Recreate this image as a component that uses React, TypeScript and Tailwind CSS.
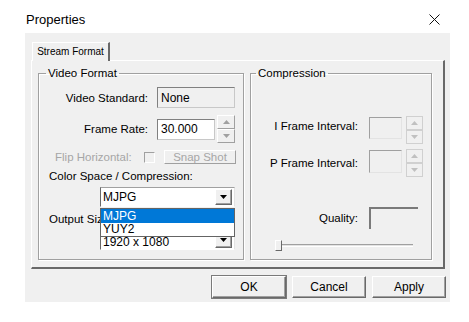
import React from "react";

const Up = ({ c = "#8a8a8a" }: { c?: string }) => (
  <svg width="7" height="4" viewBox="0 0 7 4"><path d="M0 4 L3.5 0 L7 4 Z" fill={c} /></svg>
);
const Down = ({ c = "#8a8a8a" }: { c?: string }) => (
  <svg width="7" height="4" viewBox="0 0 7 4"><path d="M0 0 L3.5 4 L7 0 Z" fill={c} /></svg>
);

function Spinner({ w, h, c, light }: { w: string; h: string; c?: string; light?: boolean }) {
  const b = light
    ? "border border-[#d0d0d0]"
    : "border border-t-white border-l-white border-b-[#a0a0a0] border-r-[#a0a0a0]";
  return (
    <div className={`flex flex-col ${w} ${h}`}>
      <div className={`flex-1 flex items-center justify-center bg-[#f0f0f0] ${b}`}>
        <Up c={c} />
      </div>
      <div className={`flex-1 flex items-center justify-center bg-[#f0f0f0] ${b}`}>
        <Down c={c} />
      </div>
    </div>
  );
}

function ArrowBtn() {
  return (
    <div className="w-[17px] h-[16px] mr-[2px] flex items-center justify-center bg-[#f0f0f0] border border-t-white border-l-white border-b-[#696969] border-r-[#696969] shadow-[inset_-1px_-1px_0_#a0a0a0]">
      <Down c="#000" />
    </div>
  );
}

function Combo({ text, low, children }: { text: string; low?: boolean; children?: React.ReactNode }) {
  return (
    <div className="relative ml-[61px] w-[135px] h-[20px] bg-white flex items-center border-t border-l border-t-[#a0a0a0] border-l-[#696969] border-b border-r border-b-white border-r-[#e3e3e3]">
      <span className={`flex-1 pl-[2px] text-[12px] leading-[14px] ${low ? "pt-[3px]" : ""}`}>{text}</span>
      <ArrowBtn />
      {children}
    </div>
  );
}

function Btn({ label, def }: { label: string; def?: boolean }) {
  return (
    <div
      className={`w-[74px] h-[22px] flex items-center justify-center bg-[#f0f0f0] text-[12px] border border-t-white border-l-white border-b-[#696969] border-r-[#696969] shadow-[inset_-1px_-1px_0_#a0a0a0] ${
        def ? "outline outline-1 outline-[#7a7a7a]" : ""
      }`}
    >
      {label}
    </div>
  );
}

export default function App() {
  return (
    <div className="w-[469px] h-[322px] bg-white flex flex-col font-['Liberation_Sans',Arial,sans-serif] text-black">
      {/* title bar */}
      <div className="h-[33px] flex items-center justify-between pl-[26px] pr-[29px] pt-[6px]">
        <span className="text-[13px] leading-[16px]">Properties</span>
        <svg width="11" height="11" viewBox="0 0 11 11">
          <path d="M0.5 0.5 L10.5 10.5 M10.5 0.5 L0.5 10.5" stroke="#111" strokeWidth="1" />
        </svg>
      </div>

      {/* body */}
      <div className="ml-[25px] w-[425px] h-[269px] bg-[#f0f0f0] flex flex-col">
        {/* tabs */}
        <div className="pl-[7px] pt-[9px] flex relative z-10">
          <div className="w-[78px] h-[19px] -mb-px bg-[#f0f0f0] border-t border-l border-t-white border-l-white border-r-2 border-r-[#696969] flex items-center justify-center text-[10px] leading-[12px]">
            Stream Format
          </div>
        </div>

        {/* panel */}
        <div className="ml-[6px] w-[414px] h-[209px] border-t border-l border-t-white border-l-white border-r-2 border-b-2 border-r-[#696969] border-b-[#696969] flex pl-[6px] pt-[5px]">
          {/* Video Format */}
          <fieldset className="w-[206px] h-[194px] border border-[#a0a0a0] shadow-[inset_1px_1px_0_#fff,1px_1px_0_#fff] flex flex-col">
            <legend className="ml-[7px] px-[2px] text-[11.5px] leading-[14px]">Video Format</legend>
            <div className="flex flex-col text-[11.5px] leading-[14px]">
              <div className="mt-[7px] h-[21px] flex items-center">
                <div className="w-[109px] text-right">Video Standard:</div>
                <div className="ml-[9px] w-[78px] h-[21px] flex items-center pl-[3px] bg-[#f0f0f0] border border-t-[#808080] border-l-[#808080] border-b-[#c8c8c8] border-r-[#c8c8c8] text-[12px]">
                  None
                </div>
              </div>
              <div className="mt-[7px] h-[28px] flex items-center">
                <div className="w-[109px] text-right">Frame Rate:</div>
                <div className="ml-[9px] w-[58px] h-[21px] flex items-center pl-[3px] bg-white border border-t-[#808080] border-l-[#808080] border-b-[#c8c8c8] border-r-[#c8c8c8] text-[12px]">
                  30.000
                </div>
                <div className="ml-[2px]">
                  <Spinner w="w-[18px]" h="h-[28px]" c="#a0a0a0" />
                </div>
              </div>
              <div className="mt-[7px] h-[14px] flex items-center">
                <div className="pl-[16px] w-[105px] text-[#a6a6a6]">Flip Horizontal:</div>
                <div className="w-[11px] h-[11px] border border-t-[#a0a0a0] border-l-[#a0a0a0] border-b-white border-r-white" />
                <div className="ml-[9px] w-[72px] h-[14px] flex items-center justify-center text-[#a6a6a6] border border-t-white border-l-white border-b-[#a0a0a0] border-r-[#a0a0a0]">
                  Snap Shot
                </div>
              </div>
              <div className="mt-[5px] h-[14px] pl-[10px]">Color Space / Compression:</div>
              <div className="mt-[4px] relative z-20">
                <Combo text="MJPG">
                  <div className="absolute left-[-1px] top-[20px] w-[135px] h-[29px] bg-white border border-[#646464] flex flex-col text-[12px]">
                    <div className="h-[14px] bg-[#0078d7] text-white pl-[2px] leading-[14px]">MJPG</div>
                    <div className="h-[13px] pl-[2px] leading-[13px]">YUY2</div>
                  </div>
                </Combo>
              </div>
              <div className="mt-[5px] h-[14px] ml-[10px] w-[51px] overflow-hidden whitespace-nowrap">Output Size:</div>
              <div className="mt-[4px]">
                <Combo text="1920 x 1080" low />
              </div>
            </div>
          </fieldset>

          {/* Compression */}
          <fieldset className="ml-[6px] w-[182px] h-[194px] border border-[#a0a0a0] shadow-[inset_1px_1px_0_#fff,1px_1px_0_#fff] flex flex-col">
            <legend className="ml-[5px] px-[2px] text-[11.5px] leading-[14px]">Compression</legend>
            <div className="flex flex-col text-[11.5px] leading-[14px]">
              <div className="mt-[36px] h-[28px] flex items-start">
                <div className="w-[107px] text-right mt-[3px]">I Frame Interval:</div>
                <div className="ml-[11px] mt-px w-[33px] h-[22px] border border-t-[#a0a0a0] border-l-[#a0a0a0] border-b-[#e3e3e3] border-r-[#e3e3e3]" />
                <div className="ml-[4px]">
                  <Spinner w="w-[17px]" h="h-[28px]" c="#c0c0c0" light />
                </div>
              </div>
              <div className="mt-[5px] h-[28px] flex items-start">
                <div className="w-[107px] text-right mt-[7px]">P Frame Interval:</div>
                <div className="ml-[11px] mt-px w-[33px] h-[23px] border border-t-[#a0a0a0] border-l-[#a0a0a0] border-b-[#e3e3e3] border-r-[#e3e3e3]" />
                <div className="ml-[4px]">
                  <Spinner w="w-[17px]" h="h-[28px]" c="#c0c0c0" light />
                </div>
              </div>
              <div className="mt-[30px] h-[22px] flex items-center">
                <div className="w-[107px] text-right">Quality:</div>
                <div className="ml-[11px] w-[49px] h-[22px] border-t-2 border-l-2 border-t-[#7a7a7a] border-l-[#7a7a7a]" />
              </div>
              <div className="mt-[11px] h-[11px] pl-[24px] flex items-center">
                <div className="relative w-[138px] h-[3px] flex items-center">
                  <div className="w-full h-[3px] border-t border-t-[#a0a0a0] border-b border-b-white bg-[#e3e3e3]" />
                  <div className="absolute left-0 top-[-4px] w-[7px] h-[11px] bg-[#f0f0f0] border border-t-white border-l-white border-b-[#696969] border-r-[#696969]" />
                </div>
              </div>
            </div>
          </fieldset>
        </div>

        {/* buttons */}
        <div className="mt-[7px] flex justify-end pr-[4px] gap-[6px]">
          <Btn label="OK" def />
          <Btn label="Cancel" />
          <Btn label="Apply" />
        </div>
      </div>
    </div>
  );
}
